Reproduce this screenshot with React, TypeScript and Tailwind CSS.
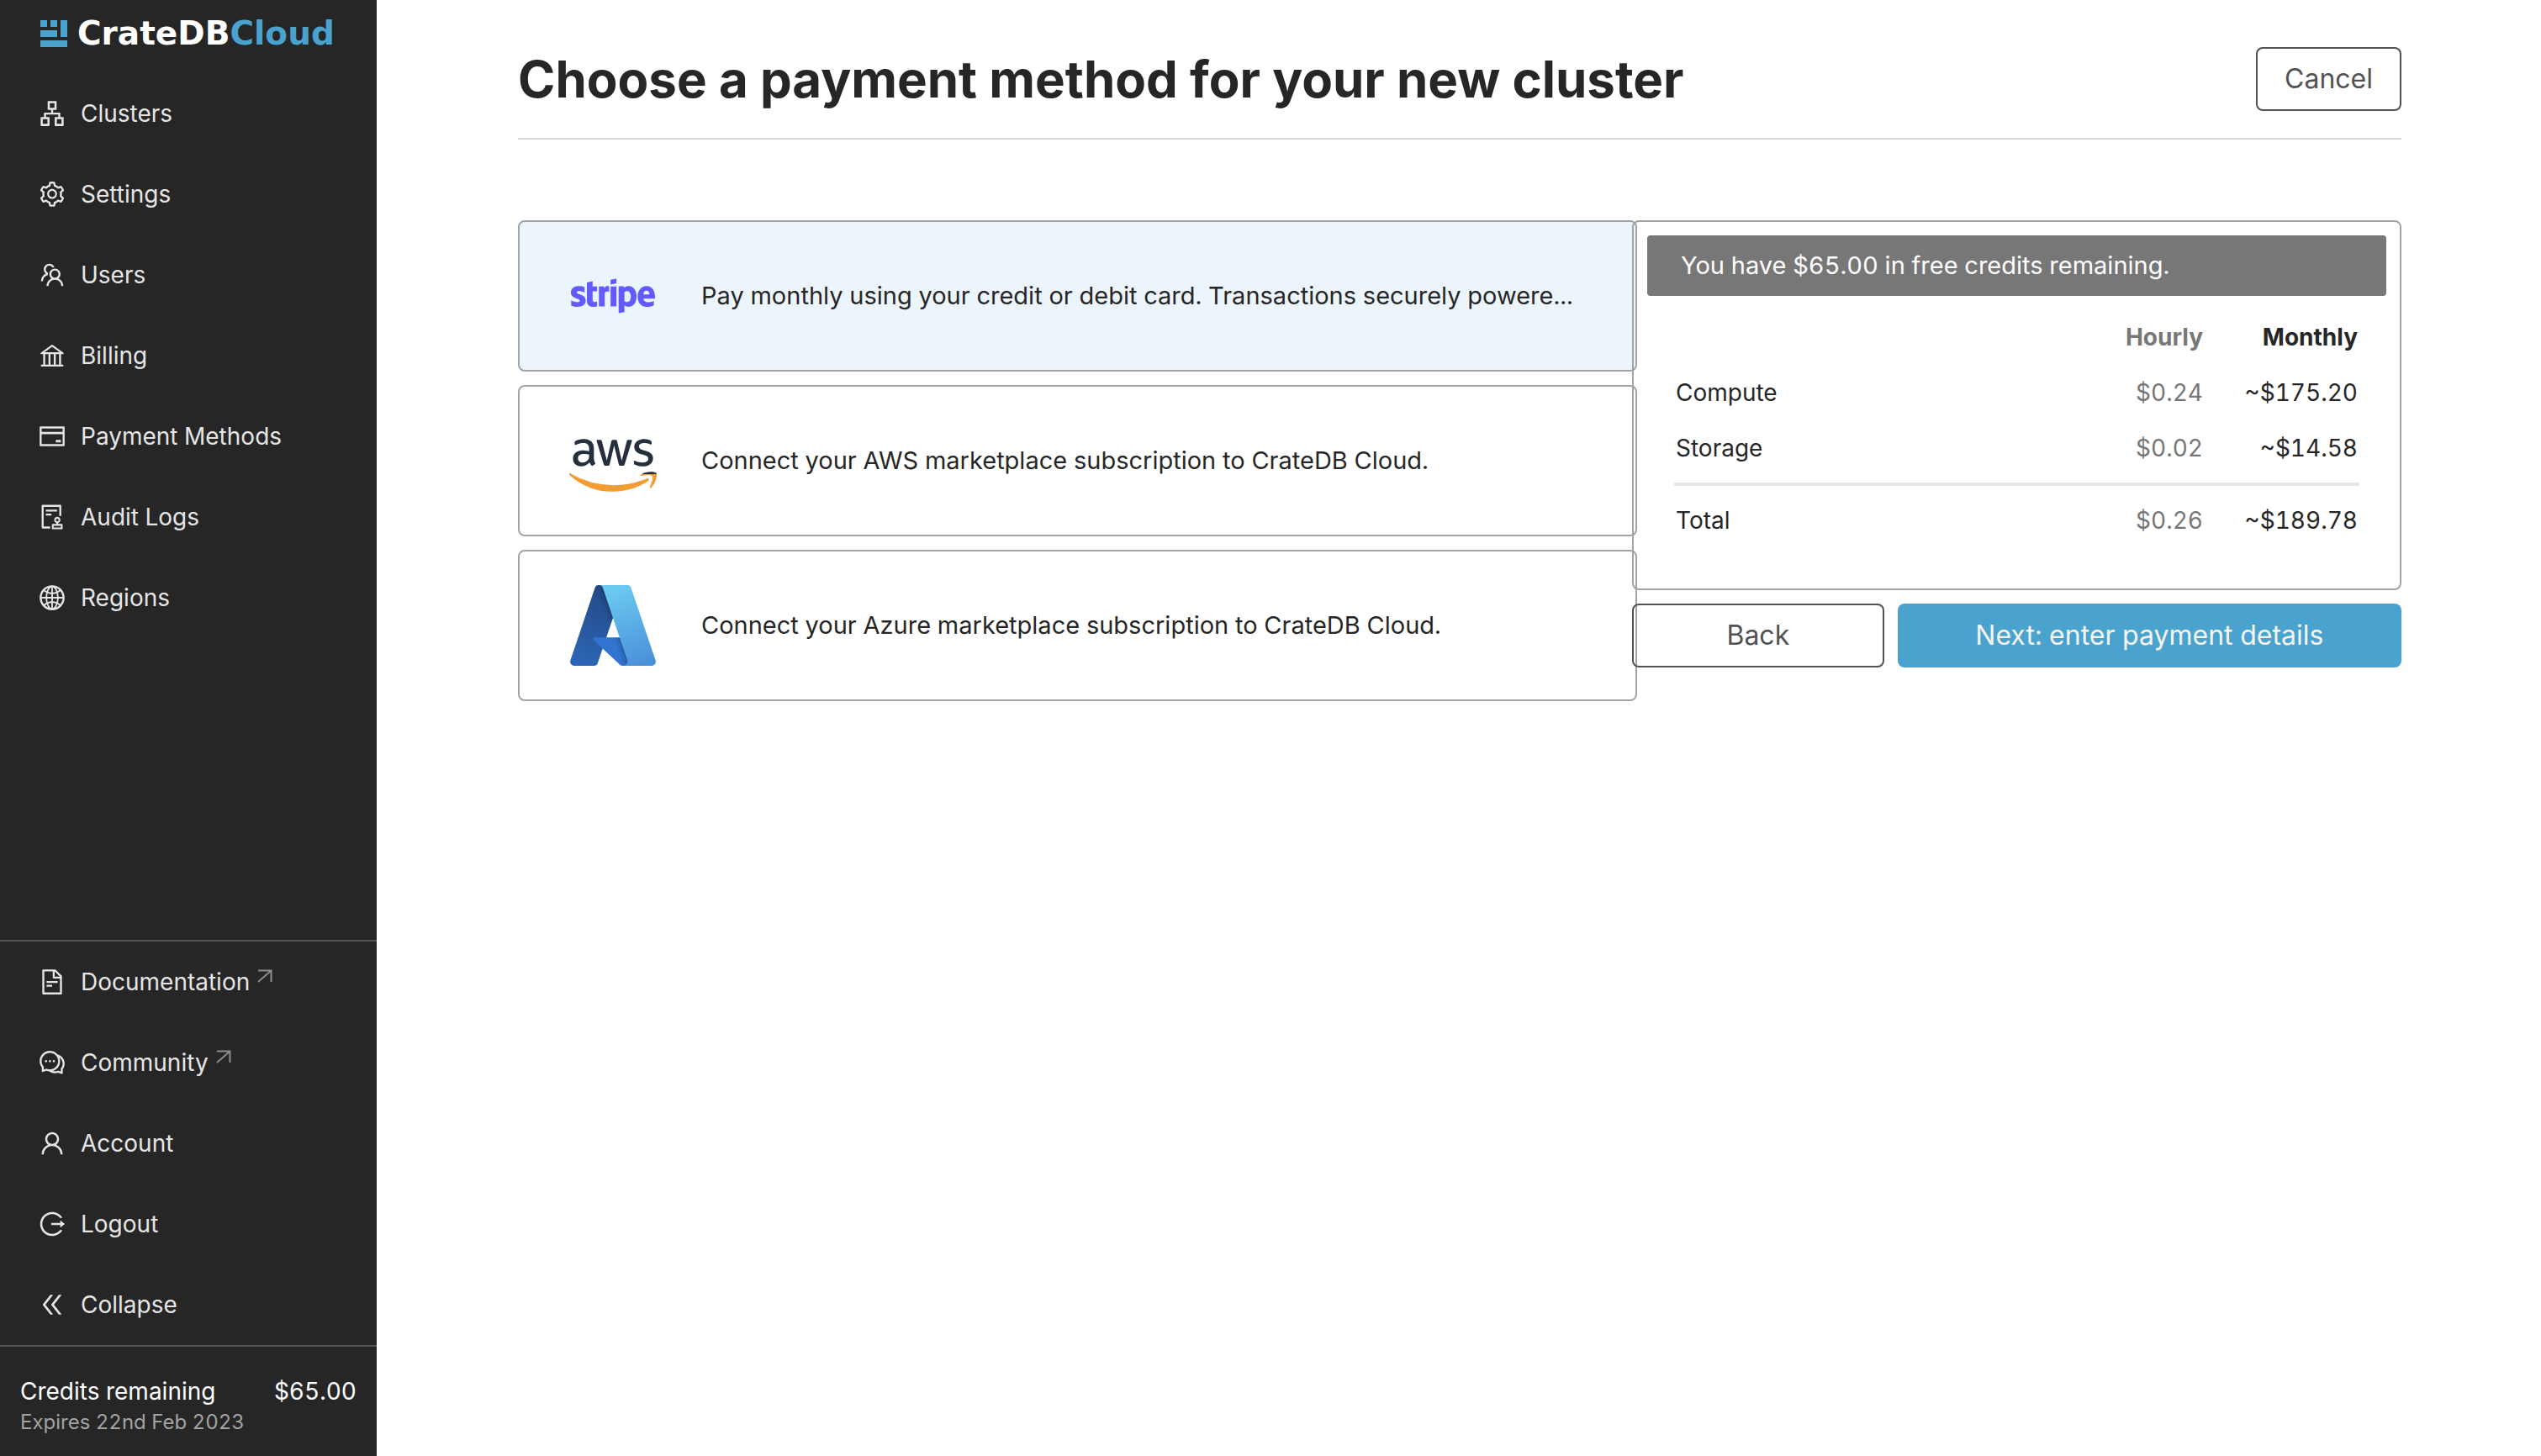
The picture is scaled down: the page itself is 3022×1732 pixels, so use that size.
import type { ReactNode } from "react";
import type { IconType } from "react-icons";
import {
  AiOutlineApartment,
  AiOutlineAudit,
  AiOutlineBank,
  AiOutlineComment,
  AiOutlineCreditCard,
  AiOutlineDoubleLeft,
  AiOutlineFileText,
  AiOutlineGlobal,
  AiOutlineLogout,
  AiOutlineSetting,
  AiOutlineTeam,
  AiOutlineUser,
} from "react-icons/ai";
import { FaAws, FaStripe } from "react-icons/fa";

type NavEntry = { label: string; icon: IconType; external?: boolean };

const mainNav: NavEntry[] = [
  { label: "Clusters", icon: AiOutlineApartment },
  { label: "Settings", icon: AiOutlineSetting },
  { label: "Users", icon: AiOutlineTeam },
  { label: "Billing", icon: AiOutlineBank },
  { label: "Payment Methods", icon: AiOutlineCreditCard },
  { label: "Audit Logs", icon: AiOutlineAudit },
  { label: "Regions", icon: AiOutlineGlobal },
];

const footerNav: NavEntry[] = [
  { label: "Documentation", icon: AiOutlineFileText, external: true },
  { label: "Community", icon: AiOutlineComment, external: true },
  { label: "Account", icon: AiOutlineUser },
  { label: "Logout", icon: AiOutlineLogout },
];

const navItem = "flex h-24 w-full items-center gap-[17px] pl-[45px] text-[28px] text-[#e5e5e5]";
const navIcon = "size-[34px] shrink-0";

function ExternalArrow() {
  return (
    <svg viewBox="0 0 18 18" className="-ml-2 mb-3 size-[18px]" fill="none" stroke="#8c8c8c" strokeWidth="2" aria-hidden="true">
      <path d="M1 1.5H16.5V15M16.5 1.5L1 15" />
    </svg>
  );
}

function NavLink({ label, icon: Icon, external }: NavEntry) {
  return (
    <li>
      <a href="#" className={navItem}>
        <Icon className={navIcon} />
        <span>{label}</span>
        {external && <ExternalArrow />}
      </a>
    </li>
  );
}

function Logo() {
  return (
    <a href="#" className="flex h-[87px] items-start gap-3 pl-12 pt-6" aria-label="CrateDB Cloud">
      <svg viewBox="0 0 32 32" className="size-8 shrink-0" fill="#4aa3cf" aria-hidden="true">
        <path d="M0 0h8v8H0zM12 0h8v8h-8zM24 0h8v20h-8zM0 12h20v8H0zM0 24h32v8H0z" />
      </svg>
      <span className="font-['DejaVu_Sans'] text-[39px] font-bold leading-8 text-white">
        CrateDB<span className="text-[#4aa3cf]">Cloud</span>
      </span>
    </a>
  );
}

function Sidebar() {
  return (
    <aside className="flex w-[448px] shrink-0 flex-col bg-[#262626]">
      <Logo />
      <nav className="flex flex-1 flex-col justify-between">
        <ul>
          {mainNav.map((item) => (
            <NavLink key={item.label} {...item} />
          ))}
        </ul>
        <ul className="border-t-2 border-[#555555]">
          {footerNav.map((item) => (
            <NavLink key={item.label} {...item} />
          ))}
          <li>
            <button type="button" className={navItem}>
              <AiOutlineDoubleLeft className={navIcon} />
              Collapse
            </button>
          </li>
        </ul>
      </nav>
      <div className="border-t-2 border-[#555555] px-6 pb-6 pt-8">
        <div className="flex justify-between text-[28px] leading-[42px] text-white">
          <span>Credits remaining</span>
          <span>$65.00</span>
        </div>
        <p className="text-2xl leading-8 text-[#a3a3a3]">Expires 22nd Feb 2023</p>
      </div>
    </aside>
  );
}

function StripeLogo() {
  return <FaStripe className="h-20 w-[100px]" fill="#635bff" />;
}

function AwsLogo() {
  return (
    <>
      <svg className="absolute size-0" aria-hidden="true">
        <linearGradient id="aws-fill" gradientUnits="userSpaceOnUse" x1="0" y1="0" x2="0" y2="512">
          <stop offset="0.62" stopColor="#252f3e" />
          <stop offset="0.62" stopColor="#f39c34" />
        </linearGradient>
      </svg>
      <FaAws viewBox="0 -34 640 512" className="h-[84px] w-[104px] shrink-0" fill="url(#aws-fill)" />
    </>
  );
}

function AzureLogo() {
  return (
    <svg viewBox="4 6.5 88 83" className="h-24 w-[102px]" role="img" aria-label="Azure">
      <linearGradient id="az-a" gradientUnits="userSpaceOnUse" x1="42.8" y1="12.7" x2="15.8" y2="92.6">
        <stop offset="0" stopColor="#234a87" />
        <stop offset="1" stopColor="#2d67b8" />
      </linearGradient>
      <linearGradient id="az-b" gradientUnits="userSpaceOnUse" x1="51.3" y1="49.9" x2="45" y2="52">
        <stop offset="0" stopOpacity="0.3" />
        <stop offset="0.07" stopOpacity="0.2" />
        <stop offset="0.32" stopOpacity="0.1" />
        <stop offset="0.62" stopOpacity="0.05" />
        <stop offset="1" stopOpacity="0" />
      </linearGradient>
      <linearGradient id="az-c" gradientUnits="userSpaceOnUse" x1="47.8" y1="10.4" x2="77.5" y2="89.4">
        <stop offset="0" stopColor="#6bcaf1" />
        <stop offset="1" stopColor="#4a8fd9" />
      </linearGradient>
      <path
        fill="url(#az-a)"
        d="M33.338 6.544h26.038l-27.03 80.087a4.152 4.152 0 0 1-3.933 2.824H8.149a4.145 4.145 0 0 1-3.928-5.47L29.404 9.368a4.152 4.152 0 0 1 3.934-2.825z"
      />
      <path
        fill="#3075cf"
        d="M71.175 60.261h-41.29a1.911 1.911 0 0 0-1.305 3.309l26.532 24.764a4.171 4.171 0 0 0 2.846 1.121h23.38z"
      />
      <path
        fill="url(#az-b)"
        d="M33.338 6.544a4.118 4.118 0 0 0-3.943 2.879L4.252 83.917a4.14 4.14 0 0 0 3.908 5.538h20.787a4.443 4.443 0 0 0 3.41-2.9l5.014-14.777 17.91 16.705a4.237 4.237 0 0 0 2.666.972H81.24L71.024 60.261l-29.781.007L59.47 6.544z"
      />
      <path
        fill="url(#az-c)"
        d="M66.595 9.364a4.145 4.145 0 0 0-3.928-2.82H33.648a4.146 4.146 0 0 1 3.928 2.82l25.184 74.62a4.146 4.146 0 0 1-3.928 5.472h29.02a4.146 4.146 0 0 0 3.927-5.472z"
      />
    </svg>
  );
}

function PaymentOption({ logo, selected = false, children }: { logo: ReactNode; selected?: boolean; children: ReactNode }) {
  return (
    <button
      type="button"
      aria-pressed={selected}
      className={`flex h-[180px] w-full items-center gap-[54px] rounded-lg border-2 border-[#a3a3a3] px-[60px] text-left text-[29px] ${
        selected ? "bg-[#edf5fc]" : ""
      }`}
    >
      <span className="flex w-[102px] shrink-0 justify-center">{logo}</span>
      <span className="whitespace-nowrap">{children}</span>
    </button>
  );
}

const costs = [
  { name: "Compute", hourly: "$0.24", monthly: "~$175.20" },
  { name: "Storage", hourly: "$0.02", monthly: "~$14.58" },
];

function CostSummary() {
  return (
    <section className="rounded-lg border-2 border-[#a3a3a3] px-4 pb-12 pt-4">
      <p className="flex h-[72px] items-center rounded bg-[#777777] px-10 text-[29px] text-white">
        You have $65.00 in free credits remaining.
      </p>
      <div className="px-8 pt-4">
        <table className="w-full border-separate border-spacing-0 text-right text-[28px]">
          <thead>
            <tr className="h-[66px]">
              <td />
              <th scope="col" className="font-bold text-[#777777]">Hourly</th>
              <th scope="col" className="w-[186px] pr-[2px] font-bold">Monthly</th>
            </tr>
          </thead>
          <tbody>
            {costs.map((row) => (
              <tr key={row.name} className="h-[66px]">
                <th scope="row" className="pl-[2px] text-left font-normal">{row.name}</th>
                <td className="text-[#777777]">{row.hourly}</td>
                <td className="pr-[2px]">{row.monthly}</td>
              </tr>
            ))}
          </tbody>
          <tfoot>
            <tr aria-hidden="true">
              <td colSpan={3} className="py-2">
                <hr className="border-t-4 border-[#e5e5ea]" />
              </td>
            </tr>
            <tr className="h-[66px]">
              <th scope="row" className="pl-[2px] text-left font-normal">Total</th>
              <td className="text-[#777777]">$0.26</td>
              <td className="pr-[2px]">~$189.78</td>
            </tr>
          </tfoot>
        </table>
      </div>
    </section>
  );
}

export default function App() {
  return (
    <div className="flex min-h-screen bg-white font-['Inter',sans-serif] tabular-nums text-[#262626]">
      <Sidebar />
      <main className="min-w-0 flex-1 pl-[168px] pr-[166px] pt-14">
        <header className="flex items-start justify-between border-b-2 border-[#d4d4d4] pb-8">
          <h1 className="text-[60px] font-bold leading-[76px] normal-nums">Choose a payment method for your new cluster</h1>
          <button type="button" className="h-[76px] rounded-lg border-2 border-[#525252] px-8 text-[32px] text-[#525252]">
            Cancel
          </button>
        </header>
        <div className="flex items-start pt-24">
          <div className="flex min-w-0 flex-[1331_1_0px] flex-col gap-4">
            <PaymentOption logo={<StripeLogo />} selected>
              Pay monthly using your credit or debit card. Transactions securely powere...
            </PaymentOption>
            <PaymentOption logo={<AwsLogo />}>Connect your AWS marketplace subscription to CrateDB Cloud.</PaymentOption>
            <PaymentOption logo={<AzureLogo />}>Connect your Azure marketplace subscription to CrateDB Cloud.</PaymentOption>
          </div>
          <div className="-ml-[6px] flex min-w-0 flex-[915_1_0px] flex-col gap-4">
            <CostSummary />
            <div className="grid grid-cols-[1fr_2fr] gap-4 text-[32px]">
              <button type="button" className="h-[76px] rounded-lg border-2 border-[#525252] text-[#525252]">
                Back
              </button>
              <button type="button" className="h-[76px] rounded-lg bg-[#4aa3cf] text-[#f5f5f5]">
                Next: enter payment details
              </button>
            </div>
          </div>
        </div>
      </main>
    </div>
  );
}
